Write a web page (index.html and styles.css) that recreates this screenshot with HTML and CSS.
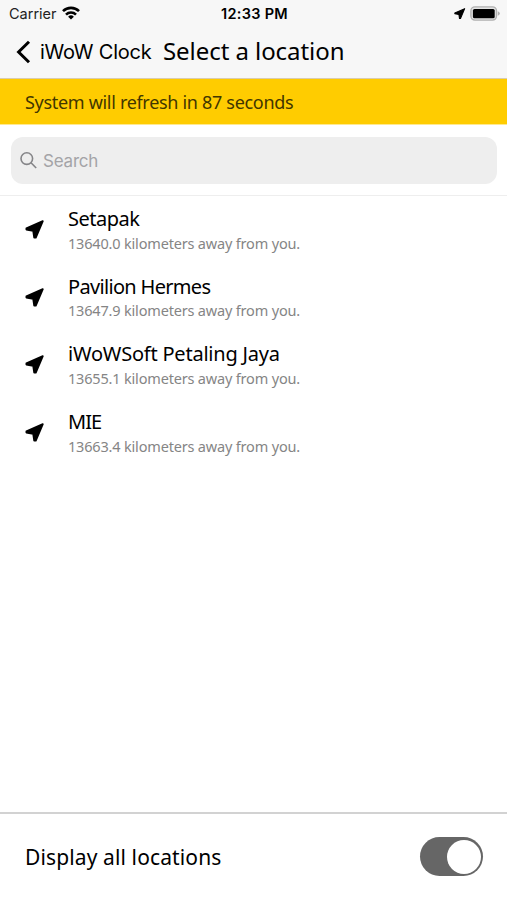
FILE: index.html
```html
<!DOCTYPE html>
<html lang="en">
<head>
<meta charset="utf-8">
<title>Select a location</title>
<link rel="stylesheet" href="styles.css">
</head>
<body>
<svg class="defs" width="0" height="0">
  <symbol id="arrow" viewBox="0 0 20 20">
    <path d="M17.8 1.1 10.8 17.6 9.2 17.6 8.2 10.9 1.4 9.5 1.4 8.4Z" fill="currentColor" stroke="currentColor" stroke-width="1.8" stroke-linejoin="round"/>
  </symbol>
</svg>
<div class="screen">
  <header class="header">
    <div class="status">
      <div class="status-left">
        <span class="carrier">Carrier</span>
        <svg class="wifi" viewBox="0 0 18 14" width="18" height="14">
          <g fill="none" stroke="#000" stroke-width="2.6"><path d="M1 5.2a11.3 11.3 0 0 1 16 0"/><path d="M4 8.6a7.1 7.1 0 0 1 10 0"/></g>
          <path d="M9 13.6 6.1 10.8a4.1 4.1 0 0 1 5.8 0Z"/>
        </svg>
      </div>
      <span class="time">12:33 PM</span>
      <div class="status-right">
        <svg class="status-arrow" width="12" height="12"><use href="#arrow"/></svg>
        <svg width="30" height="15" viewBox="0 0 30 15">
          <rect x=".9" y=".9" width="25.6" height="13.2" rx="4" fill="#e4e4e4" stroke="#b0b0b0" stroke-width="1.4"/>
          <rect x="2.9" y="2.9" width="21.8" height="9.4" rx="1.6"/>
          <path d="M27.8 5.2q2 .7 2 2.3t-2 2.3Z" fill="#b0b0b0"/>
        </svg>
      </div>
    </div>
    <nav class="nav">
      <svg class="back" width="16" height="24" viewBox="0 0 16 24"><path d="M14 1.8 3.6 12 14 22.2" fill="none" stroke="#000" stroke-width="3"/></svg>
      <span class="parent">iWoW Clock</span>
      <h1 class="title">Select a location</h1>
    </nav>
  </header>
  <div class="banner"><span>System will refresh in 87 seconds</span></div>
  <div class="search-area">
    <div class="search">
      <svg width="18" height="18" viewBox="0 0 18 18" fill="none" stroke="#858588" stroke-width="1.6"><circle cx="6.8" cy="6.6" r="5.8"/><path d="m11 10.8 5.2 5.2"/></svg>
      <span class="placeholder">Search</span>
    </div>
  </div>
  <ul class="list">
    <li class="row"><svg class="pin" width="20" height="20"><use href="#arrow"/></svg><div><div class="name n1">Setapak</div><div class="distance">13640.0 kilometers away from you.</div></div></li>
    <li class="row"><svg class="pin" width="20" height="20"><use href="#arrow"/></svg><div><div class="name n2">Pavilion Hermes</div><div class="distance">13647.9 kilometers away from you.</div></div></li>
    <li class="row"><svg class="pin" width="20" height="20"><use href="#arrow"/></svg><div><div class="name n3">iWoWSoft Petaling Jaya</div><div class="distance">13655.1 kilometers away from you.</div></div></li>
    <li class="row"><svg class="pin" width="20" height="20"><use href="#arrow"/></svg><div><div class="name n4">MIE</div><div class="distance">13663.4 kilometers away from you.</div></div></li>
  </ul>
  <footer class="footer">
    <span class="footer-label">Display all locations</span>
    <span class="toggle"><span class="knob"></span></span>
  </footer>
</div>
</body>
</html>
```
FILE: styles.css
```css
* { box-sizing: border-box; }
body { margin: 0; background: #fff; color: #000; font-family: "Noto Sans", "Open Sans", sans-serif; }
.defs { display: block; }
.screen { width: 507px; height: 900px; display: flex; flex-direction: column; overflow: hidden; white-space: nowrap; }
.header { height: 79px; background: #f7f7f7; border-bottom: 1px solid #d9ccae; }
.status { height: 27px; padding: 0 7px 0 9px; display: grid; grid-template-columns: 1fr auto 1fr; align-items: center; font-family: Inter, sans-serif; font-size: 14.5px; }
.status-left { display: flex; align-items: center; gap: 5px; }
.carrier { color: #222; }
.wifi { margin-top: -2px; }
.time { font-weight: 600; letter-spacing: .3px; }
.status-right { display: flex; align-items: center; justify-content: flex-end; gap: 4px; }
.nav { height: 49px; display: flex; align-items: center; padding-left: 15px; }
.back { margin-right: 9px; }
.parent { width: 123px; font-family: Inter, sans-serif; font-size: 20px; letter-spacing: -.22px; }
.title { margin: -2px 0 0; font-size: 24px; font-weight: 400; line-height: 48px; letter-spacing: -.06px; }
.banner { height: 46px; padding-left: 25px; background: #fc0; border-bottom: 1px solid #ffe98f; font-size: 18px; line-height: 46px; letter-spacing: -.31px; color: #423600; }
.search-area { height: 71px; padding: 12px 10px 11px 11px; border-bottom: 1px solid #eee; }
.search { height: 47px; border-radius: 12px; background: #eee; display: flex; align-items: center; padding-left: 9px; gap: 5px; }
.placeholder { font-family: Inter, sans-serif; font-size: 17px; letter-spacing: -.2px; color: #a4a4a7; }
.list { flex: 1; margin: 0; padding: 0; list-style: none; }
.row { height: 67.7px; display: flex; padding: 9px 0 0 25px; }
.pin { width: 20px; margin: 15px 23px 0 0; }
.name { font-size: 20px; line-height: 27.5px; }
.n1 { letter-spacing: -.5px; }
.n2 { letter-spacing: -.68px; }
.n3 { letter-spacing: -.22px; }
.n4 { letter-spacing: -1px; }
.distance { font-size: 14.5px; line-height: 21.5px; letter-spacing: -.18px; color: #858585; }
.footer { height: 88px; border-top: 2px solid #d2d2d2; display: flex; align-items: center; justify-content: space-between; padding: 0 24px 1px 25px; }
.footer-label { font-size: 21px; letter-spacing: .12px; }
.toggle { width: 63px; height: 39px; border-radius: 20px; background: #666; display: flex; justify-content: flex-end; padding: 2.5px; }
.knob { width: 34px; height: 34px; border-radius: 50%; background: #fff; }
```
